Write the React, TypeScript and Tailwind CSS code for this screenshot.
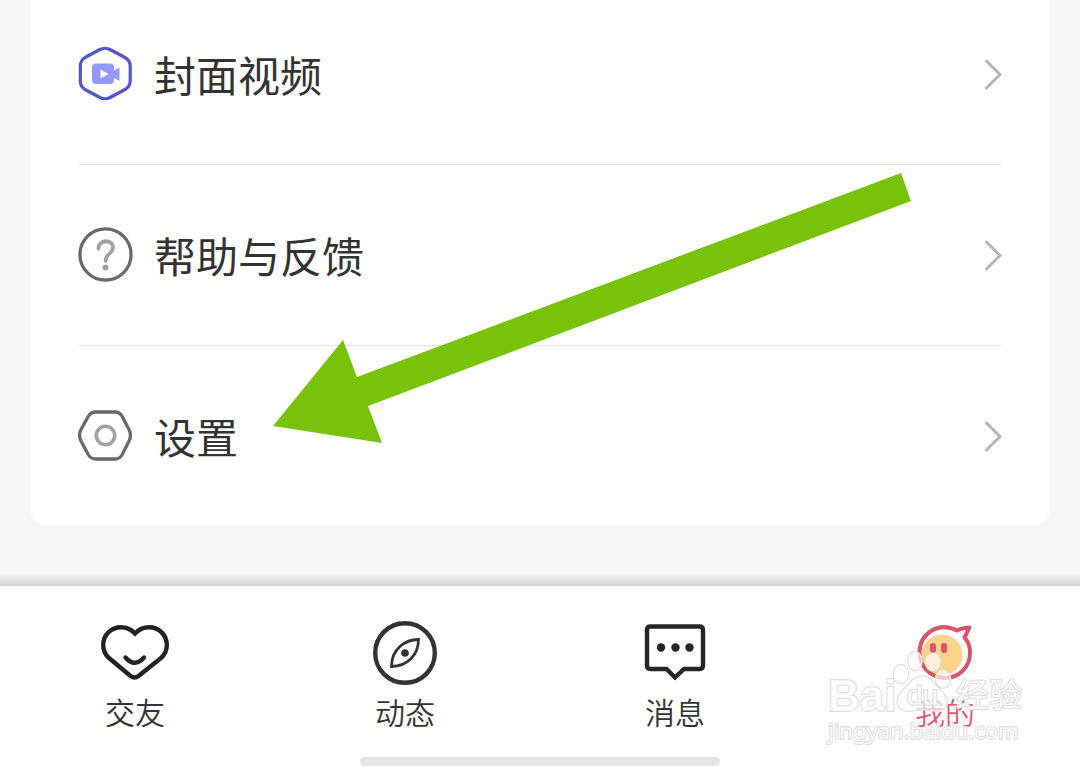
import type { ReactNode } from 'react'

interface MenuItem {
  id: string
  label: string
  icon: ReactNode
}

interface TabItem extends MenuItem {
  active?: boolean
}

function VideoIcon() {
  return (
    <svg viewBox="0 0 54 60" className="w-[54px] h-[60px] shrink-0 overflow-visible" fill="none" aria-hidden="true">
      <path d="M21 6Q27 2.500 33 6L47 13.500Q52.200 16.500 52.200 22V37Q52.200 42.500 47 45.500L33 53Q27 56.500 21 53L7 45.500Q2.300 42.500 2.300 37V22Q2.300 16.500 7 13.500Z" stroke="#5256c9" strokeWidth="3.200" />
      <rect x="14" y="19.500" width="22" height="20.500" rx="4" fill="#9398fb" />
      <path d="M35 27L41.500 23.500V37L35 33.500Z" fill="#9398fb" />
      <path d="M22.500 25.500V34.500L30.500 30Z" fill="#fff" />
    </svg>
  )
}

function HelpIcon() {
  return (
    <svg viewBox="0 0 54 60" className="w-[54px] h-[60px] shrink-0 overflow-visible" fill="none" aria-hidden="true">
      <circle cx="27.500" cy="29.500" r="25.600" stroke="#696969" strokeWidth="3.300" />
      <path d="M20.500 23.500C20.500 14 35 14 35 22.500C35 28.500 27.500 28.500 27.500 36" stroke="#a2a2a2" strokeWidth="3.800" strokeLinecap="round" />
      <circle cx="27.500" cy="42.500" r="3" fill="#a2a2a2" />
    </svg>
  )
}

function SettingsIcon() {
  return (
    <svg viewBox="0 0 54 60" className="w-[54px] h-[60px] shrink-0 overflow-visible" fill="none" aria-hidden="true">
      <path d="M18 6H37Q41.500 6 44 10L51 23.500Q54 29.500 51 35L44 49Q41.500 53 37 53H18Q13 53 10.500 49L3 35Q0 29.500 3 23.500L10.500 10Q13 6 18 6Z" stroke="#696969" strokeWidth="3.300" />
      <circle cx="27.500" cy="29.500" r="9.200" stroke="#a2a2a2" strokeWidth="3.600" />
    </svg>
  )
}

function ChevronIcon() {
  return (
    <svg viewBox="0 0 20 34" className="w-5 h-[34px] shrink-0" fill="none" aria-hidden="true">
      <path d="M4.500 4L18 17.500L4.500 31" stroke="#b4b3b5" strokeWidth="3" strokeLinecap="round" />
    </svg>
  )
}

function HeartIcon() {
  return (
    <svg viewBox="0 0 72 72" className="size-[72px]" fill="none" aria-hidden="true">
      <path d="M36 16.500C32 12 27 10.200 22 10.200C12 10.200 4.200 18 4.200 28C4.200 34 6.500 38 10 41L31.500 59Q35.500 62 39.500 59L62 41C65.500 38 67.800 34 67.800 28C67.800 18 60 10.200 50 10.200C45 10.200 40 12 36 16.500Z" stroke="#222" strokeWidth="4.400" />
      <path d="M26.500 40.500Q35.500 51 45 40.500" stroke="#222" strokeWidth="4.400" strokeLinecap="round" />
    </svg>
  )
}

function CompassIcon() {
  return (
    <svg viewBox="0 0 72 72" className="size-[72px]" fill="none" aria-hidden="true">
      <circle cx="36" cy="36" r="29.800" stroke="#333" strokeWidth="4.400" />
      <path d="M49.500 22.500C36 22.500 22.500 32 22.500 49.500C38 49.500 49.500 38 49.500 22.500Z" stroke="#333" strokeWidth="2.800" />
      <circle cx="36" cy="36" r="3.800" fill="#333" />
    </svg>
  )
}

function MessageIcon() {
  return (
    <svg viewBox="0 0 72 72" className="size-[72px]" fill="none" aria-hidden="true">
      <path d="M11.500 9.500H60.500Q64 9.500 64 13V48.500Q64 52 60.500 52H45L36 60.500L27.500 52H11.500Q8 52 8 48.500V13Q8 9.500 11.500 9.500Z" stroke="#262626" strokeWidth="4.400" />
      <g fill="#262626">
        <circle cx="22" cy="30.500" r="4.200" />
        <circle cx="36.500" cy="30.500" r="4.200" />
        <circle cx="50.500" cy="30.500" r="4.200" />
      </g>
    </svg>
  )
}

function MineIcon() {
  return (
    <svg viewBox="0 0 72 72" className="size-[72px]" fill="none" aria-hidden="true">
      <circle cx="33" cy="38" r="20.500" fill="#fdd38c" />
      <path d="M48 13.500C29 4 10.500 17 10.500 35.500C10.500 50 22 61 36 61C50 61 61 50 61 36C61 30 59 24 55.500 20.500L60.500 10.500C57 11 52 11 48 13.500Z" stroke="#d85669" strokeWidth="4" strokeLinejoin="round" />
      <rect x="21" y="26" width="6" height="10" rx="3" fill="#d85669" />
      <rect x="32" y="26" width="6" height="10" rx="3" fill="#d85669" />
    </svg>
  )
}

const menu: MenuItem[] = [
  { id: 'video', label: '封面视频', icon: <VideoIcon /> },
  { id: 'help', label: '帮助与反馈', icon: <HelpIcon /> },
  { id: 'settings', label: '设置', icon: <SettingsIcon /> },
]

const tabs: TabItem[] = [
  { id: 'friends', label: '交友', icon: <HeartIcon /> },
  { id: 'moments', label: '动态', icon: <CompassIcon /> },
  { id: 'messages', label: '消息', icon: <MessageIcon /> },
  { id: 'mine', label: '我的', icon: <MineIcon />, active: true },
]

function Watermark() {
  return (
    <div className="pointer-events-none absolute right-[58px] top-16 w-[194px] font-['Liberation_Sans','Noto_Sans_CJK_SC',sans-serif] text-white/80 [paint-order:stroke_fill] [-webkit-text-stroke:2px_#dedede]">
      <div className="flex h-16 items-end leading-[36px]">
        <span className="text-[44px] font-bold">Bai</span>
        <div className="relative -ml-1 h-16 w-[60px] shrink-0">
          <svg viewBox="0 0 60 64" className="size-full overflow-visible" fill="#fff" fillOpacity=".65" stroke="#dadada" strokeWidth="1.600" aria-hidden="true">
            <ellipse cx="9" cy="24" rx="7.500" ry="9.500" />
            <ellipse cx="23" cy="11" rx="7" ry="9.500" />
            <ellipse cx="41" cy="12" rx="7.500" ry="9" />
            <ellipse cx="51" cy="29" rx="7.500" ry="9" />
            <path d="M30 26C20 26 18 34 11 40C1 49 5 61 15 61C22 61 24 60 30 60C36 60 39 61 45 61C57 61 58 49 49 41C41 34 40 26 30 26Z" />
          </svg>
          <span className="absolute inset-x-0 bottom-0 text-center text-[28px]">du</span>
        </div>
        <span className="ml-auto text-[33px]">经验</span>
      </div>
      <div className="font-['Noto_Sans',sans-serif] text-[22px] leading-8">jingyan.baidu.com</div>
    </div>
  )
}

export default function App() {
  return (
    <div className="relative flex min-h-screen flex-col overflow-hidden bg-[#f5f5f5] font-['Noto_Sans_CJK_SC',sans-serif]">
      <main className="flex-1 px-[30px] pb-[60px]">
        <ul className="divide-y divide-[#e5e5e5] rounded-b-[18px] bg-white px-12">
          {menu.map((item, i) => (
            <li key={item.id}>
              <button type="button" className={`flex w-full items-center pb-15 text-left ${i === 0 ? 'pt-11' : 'pt-15'}`}>
                {item.icon}
                <span className="ml-[22px] flex-1 text-[42px] leading-[60px] text-[#333]">{item.label}</span>
                <ChevronIcon />
              </button>
            </li>
          ))}
        </ul>
      </main>

      {/* Barra inferior */}
      <footer className="relative bg-white">
        <div className="absolute inset-x-0 bottom-full h-3 bg-linear-to-b from-[#f5f5f5] to-[#d6d6d6]" />
        <nav className="grid grid-cols-4 pt-[31px] pb-6">
          {tabs.map(t => (
            <button
              key={t.id}
              type="button"
              aria-current={t.active ? 'page' : undefined}
              className={`flex flex-col items-center text-[30px] leading-[44px] font-[350] ${t.active ? 'text-[#e05a70]' : 'text-[#333]'}`}
            >
              {t.icon}
              {t.label}
            </button>
          ))}
        </nav>
        <div className="mx-auto h-[9px] w-1/3 rounded-full bg-[#e6e6e6]" />
        <Watermark />
      </footer>

      {/* Flecha que señala "设置" */}
      <svg viewBox="0 0 638 270" className="pointer-events-none absolute left-[273px] top-[173px] w-[638px] h-[270px]" aria-hidden="true">
        <path d="M0 253L70 167L84 204L628 0L638 28L95 233L109 270Z" fill="#78c20a" />
      </svg>
    </div>
  )
}
